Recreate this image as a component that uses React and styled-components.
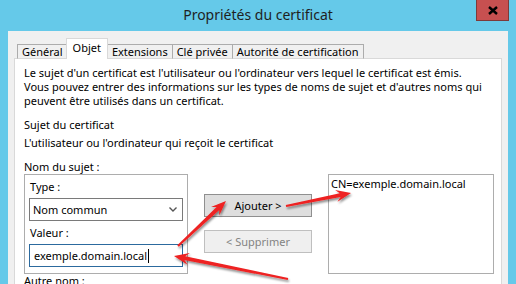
import React from 'react';
import styled, { createGlobalStyle } from 'styled-components';

const FONT = `'Segoe UI', 'Noto Sans', 'Open Sans', sans-serif`;

const Global = createGlobalStyle`
  html, body { margin: 0; padding: 0; }
  body { width: 516px; height: 284px; overflow: hidden; background: #65c9e9; }
`;

const Window = styled.div`
  position: relative;
  width: 516px;
  height: 284px;
  background: #65c9e9;
  display: flex;
  flex-direction: column;
  overflow: hidden;
  font-family: ${FONT};
  font-size: 11px;
  color: #000;
`;

const TitleBar = styled.div`
  height: 31px;
  flex: none;
  display: grid;
  grid-template-columns: 1fr auto 1fr;
  align-items: start;
`;

const Title = styled.div`
  grid-column: 2;
  font-size: 14px;
  line-height: 30px;
  color: #1f1f1f;
`;

const CloseButton = styled.div`
  grid-column: 3;
  justify-self: end;
  margin-right: 7px;
  width: 33px;
  height: 21px;
  box-sizing: border-box;
  background: #c75050;
  border: 1px solid #7d3a3a;
  border-top: none;
  display: flex;
  align-items: center;
  justify-content: center;
`;

const Body = styled.div`
  flex: 1;
  margin: 0 8px;
  background: #f0f0f0;
  padding: 7px 6px 0 6px;
  display: flex;
  flex-direction: column;
  min-height: 0;
`;

const TabList = styled.div`
  display: flex;
  align-items: flex-end;
  padding-left: 3px;
  height: 21px;
  margin-bottom: -1px;
  position: relative;
  z-index: 1;
`;

const Tab = styled.div`
  box-sizing: border-box;
  height: ${p => (p.$active ? 21 : 15)}px;
  padding: 0 ${p => (p.$active ? 6 : 4)}px;
  margin: 0 ${p => (p.$active ? -1 : 0)}px;
  border: 1px solid ${p => (p.$active ? '#d9d9d9' : '#acacac')};
  border-right-width: ${p => (p.$active ? 1 : 0)}px;
  border-bottom: ${p => (p.$active ? 'none' : '1px solid #d9d9d9')};
  background: ${p => (p.$active ? '#ffffff' : '#f0f0f0')};
  line-height: ${p => (p.$active ? 17 : 13)}px;
  white-space: nowrap;
  position: relative;
  z-index: ${p => (p.$active ? 2 : 1)};
  &:last-child { border-right-width: 1px; }
`;

const Panel = styled.div`
  flex: 1;
  background: #ffffff;
  border: 1px solid #d9d9d9;
  border-bottom: none;
  padding: 7px 6px 0 9px;
  line-height: 14px;
`;

const Para = styled.p`
  margin: 0;
`;

const Heading = styled.div`
  margin-top: ${p => p.$mt || 0}px;
`;

const Row = styled.div`
  display: flex;
  align-items: flex-start;
  gap: 16px;
`;

const GroupBox = styled.div`
  box-sizing: border-box;
  width: 164px;
  height: 100px;
  border: 1px solid #adadad;
  padding: 5px 4px 0 4px;
  display: flex;
  flex-direction: column;
`;

const FieldLabel = styled.div`
  padding-left: 1px;
  margin-top: ${p => p.$mt || 0}px;
`;

const SelectBox = styled.div`
  box-sizing: border-box;
  height: 23px;
  margin-top: 4px;
  border: 1px solid #7a7a7a;
  background: #fff;
  display: flex;
  align-items: center;
  justify-content: space-between;
  padding: 0 5px 0 3px;
`;

const TextInput = styled.div`
  box-sizing: border-box;
  height: 23px;
  margin-top: 4px;
  border: 1px solid #2c6a9e;
  background: #fff;
  display: flex;
  align-items: center;
  padding: 0 4px;
`;

const Caret = styled.span`
  display: inline-block;
  width: 1px;
  height: 14px;
  background: #000;
  margin-left: 1px;
`;

const ButtonColumn = styled.div`
  width: 108px;
  padding-top: 20px;
  display: flex;
  flex-direction: column;
  gap: 13px;
`;

const Button = styled.div`
  box-sizing: border-box;
  height: 23px;
  border: 1px solid ${p => (p.$disabled ? '#bfbfbf' : '#8f8f8f')};
  background: ${p => (p.$disabled ? '#efefef' : '#dedede')};
  color: ${p => (p.$disabled ? '#838383' : '#000')};
  display: flex;
  align-items: center;
  justify-content: center;
`;

const ListBox = styled.div`
  box-sizing: border-box;
  width: 166px;
  height: 100px;
  border: 1px solid #adadad;
  padding: 2px 2px;
  line-height: 14px;
`;

const Overlay = styled.svg`
  position: absolute;
  left: 0;
  top: 0;
  pointer-events: none;
`;

function arrowPoints([x1, y1], [x2, y2]) {
  const dx = x2 - x1;
  const dy = y2 - y1;
  const len = Math.hypot(dx, dy);
  const ux = dx / len;
  const uy = dy / len;
  const px = -uy;
  const py = ux;
  const headLen = 15;
  const headW = 6;
  const neck = 2;
  const tailW = 1;
  const bx = x2 - ux * headLen;
  const by = y2 - uy * headLen;
  const nx = x2 - ux * (headLen - 4);
  const ny = y2 - uy * (headLen - 4);
  const pts = [
    [x1 + px * tailW, y1 + py * tailW],
    [nx + px * neck, ny + py * neck],
    [bx + px * headW, by + py * headW],
    [x2, y2],
    [bx - px * headW, by - py * headW],
    [nx - px * neck, ny - py * neck],
    [x1 - px * tailW, y1 - py * tailW],
  ];
  return pts.map(p => p.map(v => v.toFixed(1)).join(',')).join(' ');
}

const ARROWS = [
  [[178, 246], [226, 201]],
  [[286, 206], [351, 193]],
  [[288, 279], [174, 256]],
];

export default function App() {
  return (
    <>
      <Global />
      <Window>
        <TitleBar>
          <Title>Propriétés du certificat</Title>
          <CloseButton>
            <svg width="10" height="9" viewBox="0 0 10 9">
              <path d="M1 1 L9 8 M9 1 L1 8" stroke="#000" strokeWidth="2.4" />
            </svg>
          </CloseButton>
        </TitleBar>
        <Body>
          <TabList>
            <Tab>Général</Tab>
            <Tab $active>Objet</Tab>
            <Tab>Extensions</Tab>
            <Tab>Clé privée</Tab>
            <Tab>Autorité de certification</Tab>
          </TabList>
          <Panel>
            <Para>
              Le sujet d'un certificat est l'utilisateur ou l'ordinateur vers lequel le certificat est émis.
              <br />
              Vous pouvez entrer des informations sur les types de noms de sujet et d'autres noms qui
              <br />
              peuvent être utilisés dans un certificat.
            </Para>
            <Heading $mt={10}>Sujet du certificat</Heading>
            <Heading $mt={4}>L'utilisateur ou l'ordinateur qui reçoit le certificat</Heading>
            <Heading $mt={10}>Nom du sujet :</Heading>
            <Row>
              <GroupBox>
                <FieldLabel>Type :</FieldLabel>
                <SelectBox>
                  <span>Nom commun</span>
                  <svg width="8" height="5" viewBox="0 0 8 5">
                    <path d="M0.5 0.5 L4 4 L7.5 0.5" fill="none" stroke="#555" strokeWidth="1.4" />
                  </svg>
                </SelectBox>
                <FieldLabel $mt={5}>Valeur :</FieldLabel>
                <TextInput>
                  exemple.domain.local<Caret />
                </TextInput>
              </GroupBox>
              <ButtonColumn>
                <Button>Ajouter &gt;</Button>
                <Button $disabled>&lt; Supprimer</Button>
              </ButtonColumn>
              <ListBox>CN=exemple.domain.local</ListBox>
            </Row>
            <Heading>Autre nom :</Heading>
          </Panel>
        </Body>
        <Overlay width="516" height="284" viewBox="0 0 516 284">
          <defs>
            <filter id="shadow" x="-20%" y="-20%" width="140%" height="140%">
              <feDropShadow dx="1" dy="2" stdDeviation="1.2" floodColor="#000" floodOpacity="0.45" />
            </filter>
          </defs>
          {ARROWS.map(([a, b], i) => (
            <polygon key={i} points={arrowPoints(a, b)} fill="#ee2020" filter="url(#shadow)" />
          ))}
        </Overlay>
      </Window>
    </>
  );
}
